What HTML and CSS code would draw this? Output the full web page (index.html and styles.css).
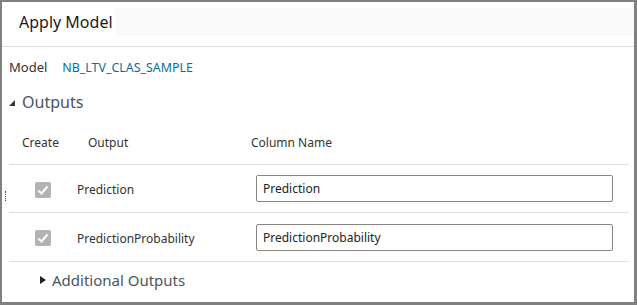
FILE: index.html
```html
<!DOCTYPE html>
<html lang="en">
<head>
  <meta charset="UTF-8" />
  <title>Apply Model</title>
  <link rel="stylesheet" href="styles.css">
</head>
<body>
  <div class="panel">
    <div class="tabbar">
      <div class="tab">Apply Model</div>
    </div>

    <div class="model-row">
      <span class="label">Model</span>
      <span class="model-name">NB_LTV_CLAS_SAMPLE</span>
    </div>

    <!-- Outputs section -->
    <div class="section-head">
      <svg class="tri-open" width="6" height="6" viewBox="0 0 6 6"><polygon points="0,6 6,0 6,6" fill="#333"/></svg>
      <span>Outputs</span>
    </div>

    <div class="grid head">
      <div class="h-create">Create</div>
      <div class="h-output">Output</div>
      <div class="h-col">Column Name</div>
    </div>
    <div class="grid row">
      <div><span class="check"><svg width="16" height="16" viewBox="0 0 16 16"><polyline points="3.5,8.5 6.5,11.5 12.5,4.5" fill="none" stroke="#fff" stroke-width="2"/></svg></span></div>
      <div class="out-name">Prediction</div>
      <div><input class="col-input" type="text" value="Prediction" /></div>
    </div>
    <div class="grid row">
      <div><span class="check"><svg width="16" height="16" viewBox="0 0 16 16"><polyline points="3.5,8.5 6.5,11.5 12.5,4.5" fill="none" stroke="#fff" stroke-width="2"/></svg></span></div>
      <div class="out-name">PredictionProbability</div>
      <div><input class="col-input" type="text" value="PredictionProbability" /></div>
    </div>

    <div class="more">
      <svg width="6" height="8" viewBox="0 0 6 8"><polygon points="0,0 6,4 0,8" fill="#222"/></svg>
      <span>Additional Outputs</span>
    </div>

    <div class="grip"></div>
  </div>
</body>
</html>
```

FILE: styles.css
```css
* { box-sizing: border-box; }
body {
  margin: 0;
  font-family: 'Noto Sans', 'Open Sans', sans-serif;
  color: #333;
  background: #fff;
}
.panel {
  position: relative;
  width: 637px; height: 305px;
  border: 2px solid #808080;
  border-right-width: 3px; border-bottom-width: 3px;
  background: #fff;
}
.tabbar {
  margin-top: 6px; margin-bottom: 10px;
  height: 28px; background: #fafafa;
  display: flex;
}
.tabbar + * { border-top: 1px solid #ddd; }
.tab {
  width: 113px; background: #fff;
  padding-left: 17px; line-height: 28px;
  font-size: 16px; color: #1a1a1a;
}
.model-row {
  height: 41px; padding-left: 7px;
  display: flex; align-items: center; gap: 15px;
  font-size: 13px;
}
.model-name { color: #0b6d96; font-size: 12.4px; }
.section-head {
  height: 30px; padding-left: 7px;
  display: flex; align-items: center; gap: 7px;
  font-size: 16px; color: #4a5561;
}
.tri-open { margin-top: 1px; }
.grid {
  margin-left: 7px; width: 620px;
  display: grid; grid-template-columns: 68px 174px 1fr;
  align-items: center;
  border-bottom: 1px solid #e0e0e0;
  font-size: 12px;
}
.head { height: 48px; padding-top: 4px; }
.h-create { padding-left: 13px; }
.h-output { padding-left: 11px; }
.row { height: 48px; }
.row + .row { height: 49px; }
.check {
  display: block; width: 16px; height: 16px;
  margin-left: 26px; margin-top: 2px;
  background: #b3b3b3; border-radius: 2px;
}
.check svg { display: block; }
.out-name { padding-top: 2px; }
.col-input {
  display: block;
  margin-left: 5px; width: 357px; height: 27px;
  border: 1px solid #8a8580; border-radius: 2px;
  padding: 0 6px;
  font-family: inherit; font-size: 12px; color: #222;
}
.more {
  height: 35px; padding-left: 38px;
  display: flex; align-items: center; gap: 6px;
  font-size: 15px; color: #4a5561;
}
.grip {
  position: absolute; left: 3px; top: 189px;
  height: 10px; border-left: 1px dotted #3b3b8a;
}
```
